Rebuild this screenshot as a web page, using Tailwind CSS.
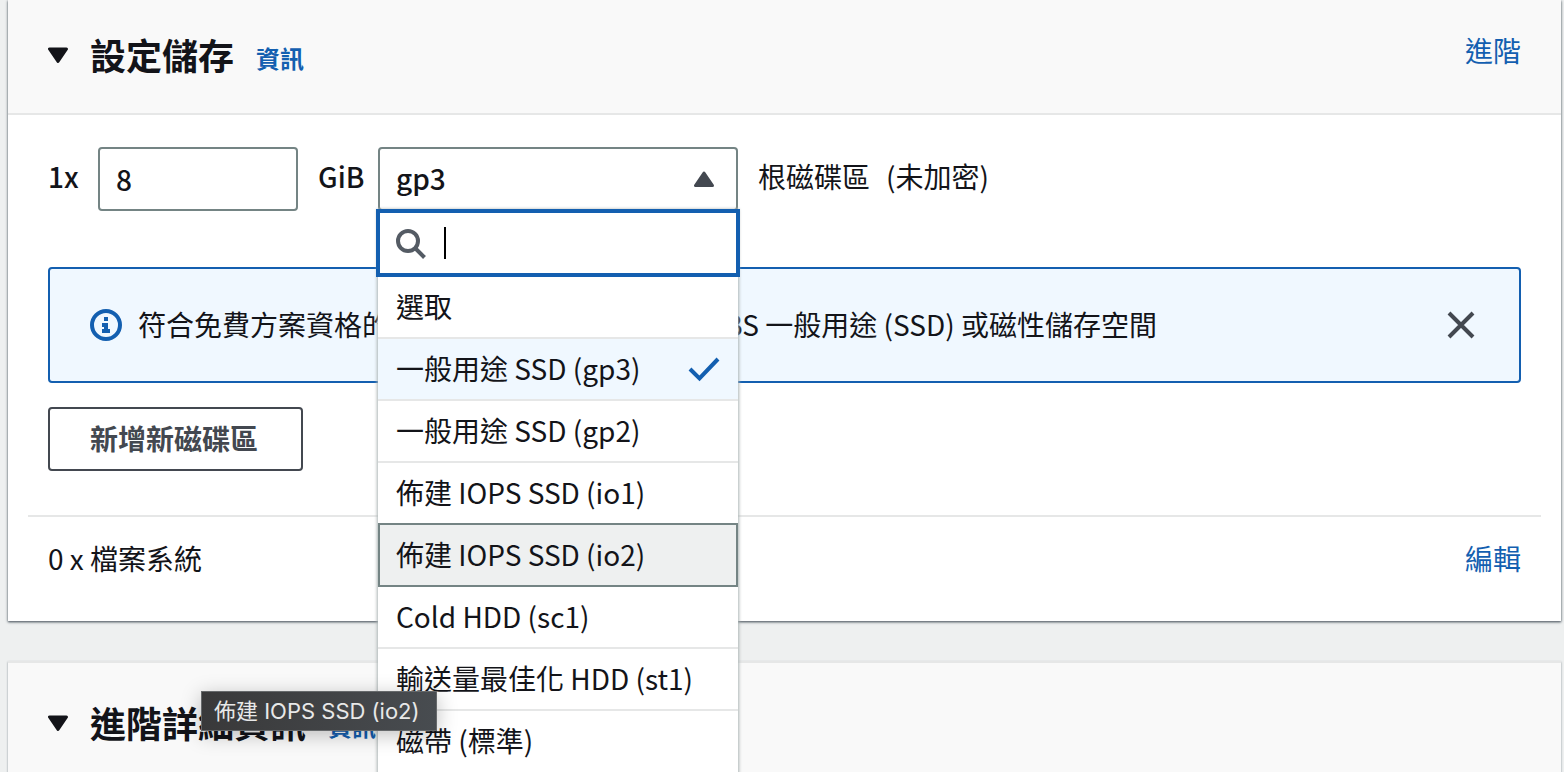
<!DOCTYPE html>
<html lang="zh-Hant">
<head>
<meta charset="utf-8">
<meta name="viewport" content="width=device-width, initial-scale=1">
<title>設定儲存</title>
<script src="https://cdn.jsdelivr.net/npm/@tailwindcss/browser@4"></script>
</head>
<body class="h-screen overflow-hidden bg-[#eef0f0] font-['Noto_Sans_CJK_TC',sans-serif] text-[28px] leading-10 text-[#131419]">
<main class="flex flex-col gap-10 pl-2 pr-[3px]">

  <section class="bg-white shadow-[0_1px_2px_0_#5b636b,0_1px_3px_0_#9aa2a8]">
    <header class="flex items-center justify-between border-b-2 border-[#e6e7e7] bg-[#f9f9f9] px-10 pt-[30px] pb-[35px]">
      <div class="flex items-center">
        <button type="button" aria-label="收合" aria-expanded="true" class="mr-[22px] pt-1">
          <svg class="block h-5 w-5" viewBox="0 0 20 20"><path d="M1.5 3h17L10 15.5z" fill="#131419" stroke="#131419" stroke-width="3" stroke-linejoin="round"/></svg>
        </button>
        <h2 class="text-[36px] leading-[45px] font-bold">設定儲存</h2>
        <a href="#info" class="ml-[22px] pt-2 text-[24px] font-bold text-[#135fb0]">資訊</a>
      </div>
      <a href="#advanced" class="-mt-2 text-[#135fb0]">進階</a>
    </header>

    <div class="px-10 pt-8">
      <div class="flex items-center">
        <label for="size" class="w-[50px] pb-1.5 font-medium">1x</label>
        <input id="size" type="text" value="8" class="h-16 w-[200px] rounded-sm border-2 border-[#748484] bg-white px-4 font-medium">
        <label for="type" class="w-20 pb-1.5 pl-5 font-medium">GiB</label>
        <div class="relative w-[360px]">
          <select id="type" class="block h-16 w-full appearance-none rounded-sm border-2 border-[#748484] bg-white px-4 pb-0.5 font-medium">
            <option>gp3</option>
          </select>
          <svg class="pointer-events-none absolute top-[22px] right-6 h-5 w-5" viewBox="0 0 20 20"><path d="M1.5 16.5h17L10 4z" fill="#434850" stroke="#434850" stroke-width="3" stroke-linejoin="round"/></svg>

          <div class="absolute inset-x-0 top-[62px] z-10 bg-white pb-4 shadow-[0_1px_3px_1px_#aab4b4]">
            <div class="relative -mx-0.5 flex h-[68px] items-center border-4 border-[#135fb0] bg-white pl-4">
              <svg class="h-8 w-8" viewBox="0 0 32 32" fill="none" stroke="#545b64" stroke-width="4"><circle cx="12" cy="14" r="10"/><path d="M19 21l9.5 9.5"/></svg>
              <span class="ml-4 h-8 w-0.5 bg-black"></span>
              <input type="search" aria-label="搜尋" class="min-w-0 flex-1 outline-none">
            </div>
            <ul role="listbox" aria-label="磁碟區類型">
              <li role="option" class="border-b-2 border-[#e6e7e7] px-[18px] pt-[9px] pb-[11px]">選取</li>
              <li role="option" aria-selected="true" class="flex items-center justify-between border-b-2 border-[#e6e7e7] bg-[#f0f8ff] px-[18px] pt-[9px] pb-[11px]">一般用途 SSD (gp3)
                <svg class="h-8 w-8" viewBox="0 0 32 32" fill="none" stroke="#135fb0" stroke-width="4"><path d="M2 17l9.5 9.5L30 7"/></svg></li>
              <li role="option" class="border-b-2 border-[#e6e7e7] px-[18px] pt-[9px] pb-[11px]">一般用途 SSD (gp2)</li>
              <li role="option" class="px-[18px] pt-[9px] pb-[11px]">佈建 IOPS SSD (io1)</li>
              <li role="option" class="border-2 border-[#748484] bg-[#eef0f0] px-4 pt-[9px] pb-[11px]">佈建 IOPS SSD (io2)</li>
              <li role="option" class="border-b-2 border-[#e6e7e7] px-[18px] pt-[9px] pb-[11px]">Cold HDD (sc1)</li>
              <li role="option" class="border-b-2 border-[#e6e7e7] px-[18px] pt-[9px] pb-[11px]">輸送量最佳化 HDD (st1)</li>
              <li role="option" class="px-[18px] pt-[9px] pb-[11px]">磁帶 (標準)</li>
            </ul>
          </div>
        </div>
        <span class="ml-5 pb-1.5">根磁碟區</span>
        <span class="ml-4 pb-1.5">(未加密)</span>
      </div>

      <div class="mt-14 flex items-center rounded-sm border-2 border-[#135fb0] bg-[#f0f8ff] py-9 pl-10 pr-[42px]">
        <svg class="h-8 w-8 shrink-0" viewBox="0 0 32 32"><circle cx="16" cy="16" r="14" fill="none" stroke="#135fb0" stroke-width="4"/><path d="M14 8h4v4h-4zM12 14h6v6h2v4h-8v-4h2v-2h-2z" fill="#135fb0"/></svg>
        <p class="-mt-0.5 ml-4 flex-1">符合免費方案資格的客戶可取得最多 30 GB 的 EBS 一般用途 (SSD) 或磁性儲存空間</p>
        <button type="button" aria-label="關閉" class="my-1"><svg class="block h-8 w-8" viewBox="0 0 32 32" fill="none" stroke="#434850" stroke-width="4"><path d="M4 4l24 24M28 4L4 28"/></svg></button>
      </div>

      <button type="button" class="mt-6 block h-16 rounded-sm border-2 border-[#434850] bg-white pr-[43px] pb-0.5 pl-10 font-bold text-[#434850]">新增新磁碟區</button>
    </div>

    <div class="mx-5 mt-11 flex items-center justify-between border-t-2 border-[#e6e7e7] px-5 pt-[21px] pb-[43px]">
      <span>0 x 檔案系統</span>
      <a href="#edit" class="text-[#135fb0]">編輯</a>
    </div>
  </section>

  <section class="border-t-2 border-[#e6e7e7] bg-[#f9f9f9] shadow-[0_1px_2px_0_#8a9298]">
    <header class="flex items-center px-10 pt-[35px] pb-9">
      <button type="button" aria-label="收合" aria-expanded="true" class="mr-[22px] pt-1">
        <svg class="block h-5 w-5" viewBox="0 0 20 20"><path d="M1.5 3h17L10 15.5z" fill="#131419" stroke="#131419" stroke-width="3" stroke-linejoin="round"/></svg>
      </button>
      <h2 class="text-[36px] leading-[45px] font-bold">進階詳細資訊</h2>
      <a href="#details" class="ml-[22px] pt-2 text-[24px] font-bold text-[#135fb0]">資訊</a>
    </header>
  </section>
</main>

<div role="tooltip" class="absolute top-[691px] left-[201px] z-20 border border-[#66696b] bg-linear-to-r from-[#39393a] to-[#484c50] pr-4 pl-3 text-[22px] leading-[38px] whitespace-nowrap text-[#e8e8e8] shadow-[0_4px_20px_#00000040] font-['Inter','Noto_Sans_CJK_TC',sans-serif]">佈建 IOPS SSD (io2)</div>
</body>
</html>
